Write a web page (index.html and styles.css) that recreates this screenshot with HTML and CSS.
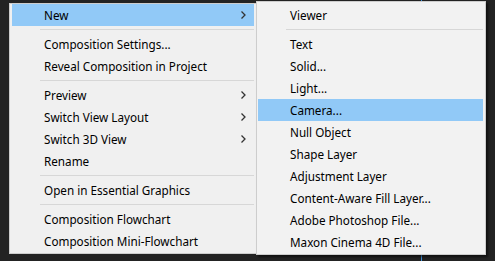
FILE: index.html
```html
<!DOCTYPE html>
<html lang="en">
<head>
    <meta charset="UTF-8">
    <meta name="viewport" content="width=device-width, initial-scale=1.0">
    <title>Composition menu</title>
    <link rel="stylesheet" href="styles.css">
</head>
<body>
    <div class="screen">
        <ul class="menu menu-main">
            <li class="item active">New<span class="arrow"><svg width="5" height="8" viewBox="0 0 5 8"><polyline points="0.5,0.5 4,4 0.5,7.5"/></svg></span></li>
            <li class="sep"></li>
            <li class="item">Composition Settings...</li>
            <li class="item">Reveal Composition in Project</li>
            <li class="sep"></li>
            <li class="item">Preview<span class="arrow"><svg width="5" height="8" viewBox="0 0 5 8"><polyline points="0.5,0.5 4,4 0.5,7.5"/></svg></span></li>
            <li class="item">Switch View Layout<span class="arrow"><svg width="5" height="8" viewBox="0 0 5 8"><polyline points="0.5,0.5 4,4 0.5,7.5"/></svg></span></li>
            <li class="item">Switch 3D View<span class="arrow"><svg width="5" height="8" viewBox="0 0 5 8"><polyline points="0.5,0.5 4,4 0.5,7.5"/></svg></span></li>
            <li class="item">Rename</li>
            <li class="sep"></li>
            <li class="item">Open in Essential Graphics</li>
            <li class="sep"></li>
            <li class="item">Composition Flowchart</li>
            <li class="item">Composition Mini-Flowchart</li>
        </ul>
        <ul class="menu menu-sub">
            <li class="item">Viewer</li>
            <li class="sep"></li>
            <li class="item">Text</li>
            <li class="item">Solid...</li>
            <li class="item">Light...</li>
            <li class="item active">Camera...</li>
            <li class="item">Null Object</li>
            <li class="item">Shape Layer</li>
            <li class="item">Adjustment Layer</li>
            <li class="item">Content-Aware Fill Layer...</li>
            <li class="item">Adobe Photoshop File...</li>
            <li class="item">Maxon Cinema 4D File...</li>
        </ul>
    </div>
</body>
</html>
```
FILE: styles.css
```css
html, body {
    margin: 0;
    padding: 0;
    height: 100%;
}
body {
    background-color: #232323;
    background-image: linear-gradient(to right, transparent 421px, #3d8fd8 421px, #3d8fd8 422px, transparent 422px);
    font-family: 'Noto Sans', 'Noto Sans CJK KR', sans-serif;
    font-size: 11.7px;
    color: #000;
}
.screen {
    display: flex;
    align-items: flex-start;
    padding-left: 9px;
}
.menu {
    list-style: none;
    margin: 0;
    background-color: #f0f0f0;
    border: 1px solid #cdcdcd;
    box-sizing: border-box;
}
.menu-main {
    width: 248px;
    margin-top: 3px;
    padding: 0 2px 1px 2px;
}
.menu-sub {
    width: 230px;
    margin-top: 1px;
    margin-left: -1px;
    padding: 2px 2px 1px 1px;
    background-color: #f2f2f2;
    box-shadow: 2px 2px 2px rgba(0, 0, 0, 0.55);
}
.item {
    display: flex;
    justify-content: space-between;
    align-items: center;
    height: 22px;
    line-height: 22px;
    padding: 0 8px 0 32px;
    white-space: nowrap;
}
.item.active {
    background-color: #91c9f7;
}
.arrow {
    display: flex;
}
.arrow svg polyline {
    fill: none;
    stroke: #333;
    stroke-width: 1.3;
}
.sep {
    height: 1px;
    margin: 3px 0 3px 28px;
    background-color: #d7d7d7;
}
```
